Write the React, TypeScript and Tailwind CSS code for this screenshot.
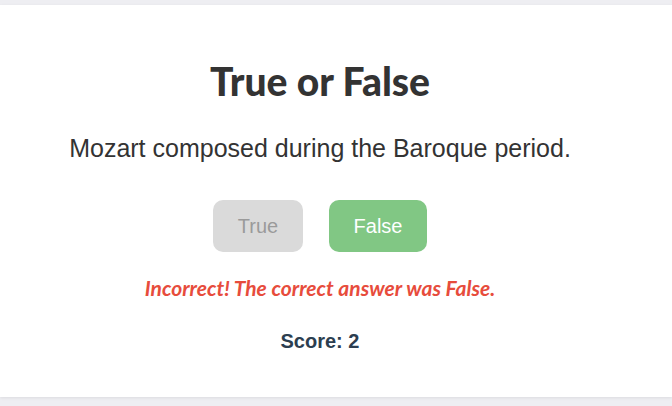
import { useState } from 'react';

const QUESTION = {
  text: 'Mozart composed during the Baroque period.',
  answer: false,
};

export default function App() {
  const [picked] = useState<boolean | null>(true);
  const score = 2;
  const correct = picked === QUESTION.answer;

  return (
    <div className="min-h-screen bg-[#eeeef2] pt-[5px]">
      <div className="h-[392px] bg-white shadow-[0_1px_3px_rgba(0,0,0,0.08)]">
        <div className="flex w-[640px] flex-col items-center pt-[56px]">
          {/* Title */}
          <h1 className="font-['Lato',sans-serif] text-[39px] font-black leading-[40px] text-[#333]">
            True or False
          </h1>

          {/* Question */}
          <p className="mt-[32px] font-['Liberation_Sans',Arial,sans-serif] text-[25px] leading-[30px] text-[#333]">
            {QUESTION.text}
          </p>

          {/* Answers */}
          <div className="mt-[37px] flex gap-[26px] font-['Liberation_Sans',Arial,sans-serif]">
            <button className="h-[52px] w-[90px] rounded-[10px] bg-[#dadada] text-[20px] text-[#9a9a9a]">
              True
            </button>
            <button className="h-[52px] w-[98px] rounded-[10px] bg-[#81c784] text-[20px] text-white">
              False
            </button>
          </div>

          {/* Feedback */}
          {!correct && (
            <p className="mt-[24px] font-['Lato',sans-serif] text-[21px] font-bold italic leading-[24px] text-[#e74c3c]">
              Incorrect! The correct answer was False.
            </p>
          )}

          {/* Score */}
          <p className="mt-[29px] font-['Liberation_Sans',Arial,sans-serif] text-[20px] font-bold leading-[24px] text-[#2c3e50]">
            Score: {score}
          </p>
        </div>
      </div>
    </div>
  );
}
